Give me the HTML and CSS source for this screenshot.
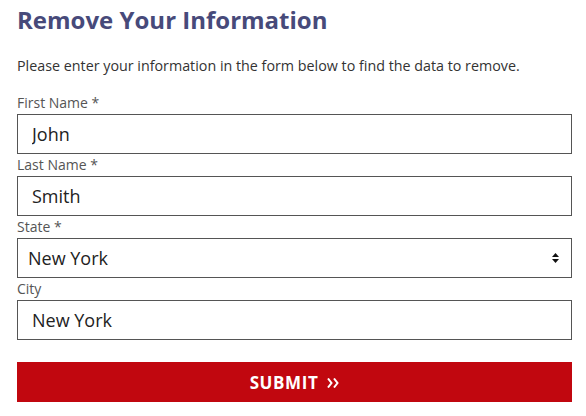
FILE: index.html
```html
<!DOCTYPE html>
<html lang="en">
<head>
    <meta charset="UTF-8">
    <meta name="viewport" content="width=device-width, initial-scale=1.0">
    <title>Remove Your Information</title>
    <link rel="stylesheet" href="styles.css">
</head>
<body>
    <div class="container">
        <h1>Remove Your Information</h1>
        <p class="intro">Please enter your information in the form below to find the data to remove.</p>
        <form class="remove-form" onsubmit="return false;">
            <label for="first-name">First Name *</label>
            <input type="text" id="first-name" value="John">

            <label for="last-name">Last Name *</label>
            <input type="text" id="last-name" value="Smith">

            <label for="state">State *</label>
            <div class="select-wrap">
                <select id="state">
                    <option>New York</option>
                    <option>New Jersey</option>
                    <option>California</option>
                </select>
                <svg class="select-arrows" width="7" height="10" viewBox="0 0 7 10">
                    <path d="M3.5 0 L7 4 L0 4 Z" fill="#111"/>
                    <path d="M0 6 L7 6 L3.5 10 Z" fill="#111"/>
                </svg>
            </div>

            <label for="city">City</label>
            <input type="text" id="city" value="New York">

            <button type="submit" class="submit-btn">
                SUBMIT
                <svg class="chev" width="12" height="10" viewBox="0 0 12 10">
                    <path d="M1 0.5 L4.5 5 L1 9.5" fill="none" stroke="#fff" stroke-width="2"/>
                    <path d="M7 0.5 L10.5 5 L7 9.5" fill="none" stroke="#fff" stroke-width="2"/>
                </svg>
            </button>
        </form>
    </div>
</body>
</html>
```

FILE: styles.css
```css
body {
    margin: 0;
    background: #fff;
    font-family: 'Open Sans', sans-serif;
    color: #333;
}
.container {
    width: 555px;
    margin-left: 17px;
}
h1 {
    margin: 0;
    padding-top: 3px;
    font-size: 24px;
    line-height: 33px;
    font-weight: 700;
    color: #474a7a;
}
.intro {
    margin: 20px 0 16px;
    font-size: 14.3px;
    line-height: 20px;
    color: #333;
}
.remove-form {
    display: flex;
    flex-direction: column;
}
.remove-form label {
    font-size: 14px;
    line-height: 22px;
    color: #555;
}
.remove-form input,
.remove-form select {
    box-sizing: border-box;
    width: 100%;
    height: 40px;
    margin: 0;
    border: 1px solid #555;
    border-radius: 0;
    background: #fff;
    font-family: 'Open Sans', sans-serif;
    font-size: 18px;
    color: #222;
    outline: none;
}
.remove-form input {
    padding: 0 14px;
}
.select-wrap {
    position: relative;
}
.remove-form select {
    appearance: none;
    -webkit-appearance: none;
    padding: 0 10px;
}
.select-arrows {
    position: absolute;
    right: 13px;
    top: 15px;
    pointer-events: none;
}
.submit-btn {
    display: flex;
    align-items: center;
    justify-content: center;
    gap: 9px;
    margin-top: 22px;
    height: 40px;
    border: none;
    background: #c1070f;
    color: #fff;
    font-family: 'Open Sans', sans-serif;
    font-size: 17px;
    font-weight: 700;
    letter-spacing: 0.6px;
    cursor: pointer;
}
.chev {
    margin-top: 1px;
}
```
